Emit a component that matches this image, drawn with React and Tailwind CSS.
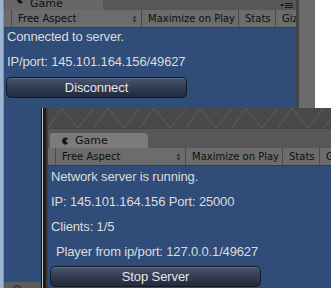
const ui = { fontFamily: '"DejaVu Sans", "Liberation Sans", sans-serif' }
const body = { fontFamily: '"Liberation Sans", Arial, sans-serif' }

const GameIcon = () => (
    <svg width="8" height="8" viewBox="0 0 8 8" className="shrink-0">
        <path d="M7 1.6 A3.4 3.4 0 1 0 7 6.4 L4.6 4 Z" fill="#161616" />
    </svg>
)

const UpDown = () => (
    <svg width="5" height="8" viewBox="0 0 5 8">
        <path d="M0.5 3.2 L2.5 0.8 L4.5 3.2 Z M0.5 4.8 L2.5 7.2 L4.5 4.8 Z" fill="#2a2a2a" />
    </svg>
)

const Hatch = () => (
    <svg width="100%" height="100%" className="block">
        <defs>
            <pattern id="hx" width="46" height="20" patternUnits="userSpaceOnUse">
                <path d="M0 20 L14 0 M14 0 L30 20 M30 20 L46 0" stroke="#5c5c5c" strokeWidth="1" fill="none" />
            </pattern>
        </defs>
        <rect width="100%" height="100%" fill="#494949" />
        <rect width="100%" height="100%" fill="url(#hx)" />
    </svg>
)

// scene view style toolbar, same in both windows
const Toolbar = () => (
    <div className="flex h-[18px] bg-[#6c6c6c] border-b border-[#3c3c3c] text-[10px] leading-[17px] text-[#0e0e0e] whitespace-nowrap overflow-hidden" style={ui}>
        <div className="w-[7px] shrink-0" />
        <div className="flex items-center w-[131px] shrink-0 border-l border-r border-[#4a4a4a] pl-[6px] pr-[4px]">
            <span className="flex-1">Free Aspect</span>
            <UpDown />
        </div>
        <div className="shrink-0 w-[97px] pl-[6px] border-r border-[#4a4a4a]">Maximize on Play</div>
        <div className="shrink-0 w-[37px] pl-[6px] border-r border-[#4a4a4a]">Stats</div>
        <div className="shrink-0 pl-[6px]">Gizmos</div>
    </div>
)

const Tab = ({ className }) => (
    <div className={`flex items-center h-[15px] w-[98px] bg-[#7b7b7b] rounded-tr-[4px] rounded-tl-[2px] pl-[11px] text-[11px] leading-[15px] text-[#101010] ${className}`} style={ui}>
        <GameIcon />
        <span className="ml-[6px]">Game</span>
    </div>
)

const UnityButton = ({ label, width }) => (
    <div
        className="h-[21px] rounded-[5px] border border-[#121824] bg-gradient-to-b from-[#4a5670] via-[#323d54] to-[#222a3b] text-center text-[13px] leading-[19px] tracking-[-0.1px] text-[#e6e6e6] shadow-[inset_0_1px_0_rgba(140,155,185,0.35)]"
        style={{ ...body, width }}
    >
        {label}
    </div>
)

const Line = ({ children, className = '' }) => (
    <div className={`h-[16px] text-[13px] leading-[16px] tracking-[-0.15px] text-[#dcdcdc] whitespace-nowrap ${className}`} style={body}>
        {children}
    </div>
)

export default function App() {
    return (
        <div className="relative w-[331px] h-[288px] overflow-hidden bg-[#6b6b6b] flex">
            <div className="w-[4px] shrink-0 bg-[#9db5d3] border-r border-[#7f93ad]" />

            {/* back game window */}
            <div className="w-[292px] shrink-0 flex flex-col h-full">
                <div className="h-[10px] bg-[#575757] flex items-end relative">
                    <Tab className="!h-[14px] bg-[#676767] absolute left-[1px] bottom-0 items-start" />
                    <svg width="13" height="6" viewBox="0 0 13 6" className="absolute left-[276px] top-[3px]">
                        <path d="M0 1 L4 1 L2 4 Z" fill="#1a1a1a" />
                        <path d="M5 0.5 H13 M5 2.5 H13 M5 4.5 H13" stroke="#1a1a1a" strokeWidth="1" />
                    </svg>
                </div>
                <Toolbar />
                <div className="flex-1 bg-[#304c79] pt-[1px] pl-[3px] flex flex-col">
                    <Line>Connected to server.</Line>
                    <Line className="mt-[9px]">IP/port: 145.101.164.156/49627</Line>
                    <div className="mt-[7px] -ml-[1px]">
                        <UnityButton label="Disconnect" width={181} />
                    </div>
                </div>
                <div className="h-[6px] bg-[#5d5d5d] relative">
                    <div className="absolute left-[8px] top-[3px] w-[10px] h-[10px] rounded-full border-2 border-[#3a3a3a]" />
                </div>
            </div>

            <div className="w-[3px] shrink-0 bg-[#464646]" />
            <div className="w-[16px] shrink-0 bg-[#6b6b6b]" />
            <div className="flex-1 bg-white" />

            {/* front game window */}
            <div className="absolute left-[41px] top-[108px] w-[290px] h-[180px] flex">
                <div className="w-[1px] bg-[#121212]" />
                <div className="w-[1px] bg-[#c9c9c9]" />
                <div className="w-[3px] bg-[#1e1b18]" />
                <div className="w-[2px] bg-[#3e3e3e]" />
                <div className="flex-1 flex flex-col min-w-0">
                    <div className="h-[20px]">
                        <Hatch />
                    </div>
                    <div className="h-[20px] bg-[#575757] border-t border-[#444] flex items-end pl-[2px]">
                        <Tab />
                    </div>
                    <Toolbar />
                    <div className="flex-1 bg-[#304c79] pt-[3px] pl-[3px] flex flex-col">
                        <Line>Network server is running.</Line>
                        <Line className="mt-[9px]">IP: 145.101.164.156 Port: 25000</Line>
                        <Line className="mt-[9px]">Clients: 1/5</Line>
                        <Line className="mt-[9px] pl-[5px]">Player from ip/port: 127.0.0.1/49627</Line>
                        <div className="mt-[6px] -ml-[1px]">
                            <UnityButton label="Stop Server" width={211} />
                        </div>
                    </div>
                </div>
            </div>
        </div>
    )
}
